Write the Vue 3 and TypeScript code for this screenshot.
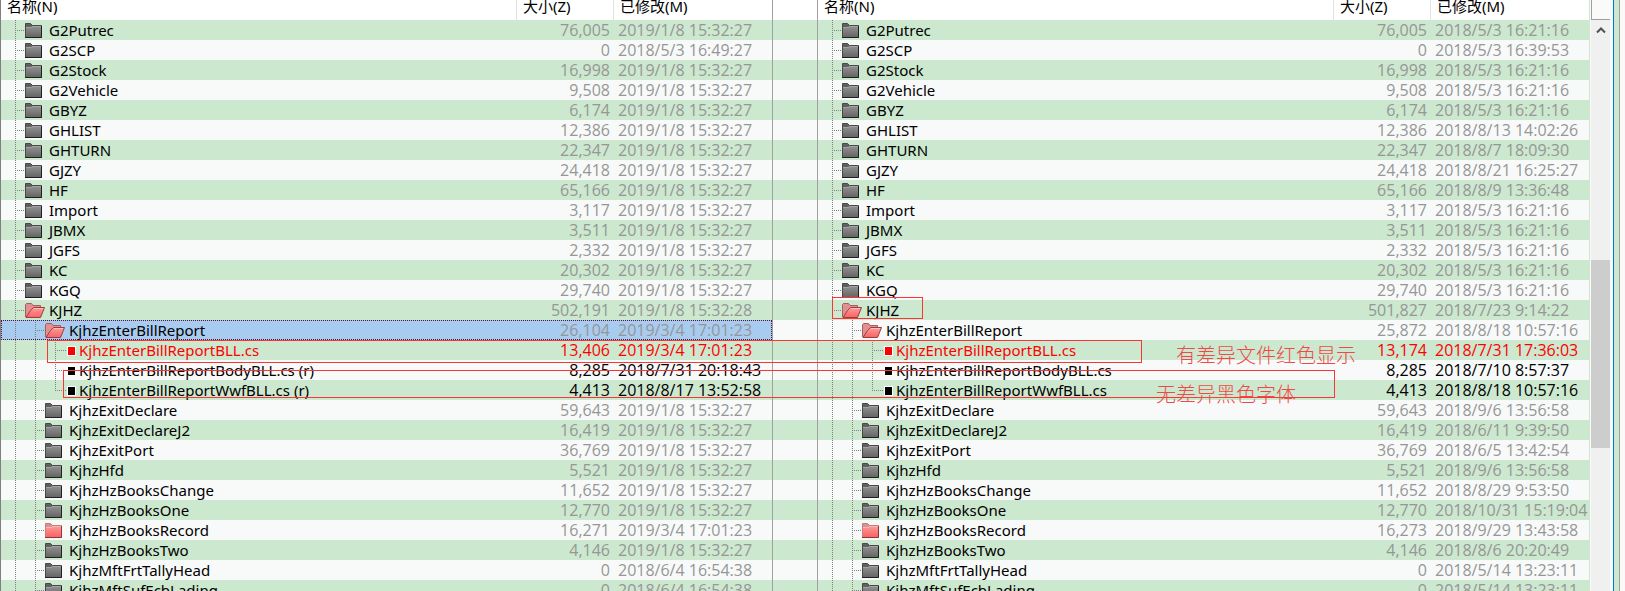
<script setup lang="ts">
type Kind = 'folder' | 'changed' | 'open' | 'file' | 'diff'

interface Entry {
  name: string
  kind: Kind
  depth: number
  size: string
  date: string
  selected?: boolean
  last?: boolean
}

type Source = [string, Kind, number, string, string, string, string]

const common = '2019/1/8 15:32:27'
const source: Source[] = [
  ['G2Putrec', 'folder', 1, '76,005', common, '76,005', '2018/5/3 16:21:16'],
  ['G2SCP', 'folder', 1, '0', '2018/5/3 16:49:27', '0', '2018/5/3 16:39:53'],
  ['G2Stock', 'folder', 1, '16,998', common, '16,998', '2018/5/3 16:21:16'],
  ['G2Vehicle', 'folder', 1, '9,508', common, '9,508', '2018/5/3 16:21:16'],
  ['GBYZ', 'folder', 1, '6,174', common, '6,174', '2018/5/3 16:21:16'],
  ['GHLIST', 'folder', 1, '12,386', common, '12,386', '2018/8/13 14:02:26'],
  ['GHTURN', 'folder', 1, '22,347', common, '22,347', '2018/8/7 18:09:30'],
  ['GJZY', 'folder', 1, '24,418', common, '24,418', '2018/8/21 16:25:27'],
  ['HF', 'folder', 1, '65,166', common, '65,166', '2018/8/9 13:36:48'],
  ['Import', 'folder', 1, '3,117', common, '3,117', '2018/5/3 16:21:16'],
  ['JBMX', 'folder', 1, '3,511', common, '3,511', '2018/5/3 16:21:16'],
  ['JGFS', 'folder', 1, '2,332', common, '2,332', '2018/5/3 16:21:16'],
  ['KC', 'folder', 1, '20,302', common, '20,302', '2018/5/3 16:21:16'],
  ['KGQ', 'folder', 1, '29,740', common, '29,740', '2018/5/3 16:21:16'],
  ['KJHZ', 'open', 1, '502,191', '2019/1/8 15:32:28', '501,827', '2018/7/23 9:14:22'],
  ['KjhzEnterBillReport', 'open', 2, '26,104', '2019/3/4 17:01:23', '25,872', '2018/8/18 10:57:16'],
  ['KjhzEnterBillReportBLL.cs', 'diff', 3, '13,406', '2019/3/4 17:01:23', '13,174', '2018/7/31 17:36:03'],
  ['KjhzEnterBillReportBodyBLL.cs', 'file', 3, '8,285', '2018/7/31 20:18:43', '8,285', '2018/7/10 8:57:37'],
  ['KjhzEnterBillReportWwfBLL.cs', 'file', 3, '4,413', '2018/8/17 13:52:58', '4,413', '2018/8/18 10:57:16'],
  ['KjhzExitDeclare', 'folder', 2, '59,643', common, '59,643', '2018/9/6 13:56:58'],
  ['KjhzExitDeclareJ2', 'folder', 2, '16,419', common, '16,419', '2018/6/11 9:39:50'],
  ['KjhzExitPort', 'folder', 2, '36,769', common, '36,769', '2018/6/5 13:42:54'],
  ['KjhzHfd', 'folder', 2, '5,521', common, '5,521', '2018/9/6 13:56:58'],
  ['KjhzHzBooksChange', 'folder', 2, '11,652', common, '11,652', '2018/8/29 9:53:50'],
  ['KjhzHzBooksOne', 'folder', 2, '12,770', common, '12,770', '2018/10/31 15:19:04'],
  ['KjhzHzBooksRecord', 'changed', 2, '16,271', '2019/3/4 17:01:23', '16,273', '2018/9/29 13:43:58'],
  ['KjhzHzBooksTwo', 'folder', 2, '4,146', common, '4,146', '2018/8/6 20:20:49'],
  ['KjhzMftFrtTallyHead', 'folder', 2, '0', '2018/6/4 16:54:38', '0', '2018/5/14 13:23:11'],
  ['KjhzMftSufEcbLading', 'folder', 2, '0', '2018/6/4 16:54:38', '0', '2018/5/14 13:23:11'],
]

function side(left: boolean): Entry[] {
  return source.map((s, i) => ({
    name: left && s[1] === 'file' ? `${s[0]} (r)` : s[0],
    kind: s[1],
    depth: s[2],
    size: left ? s[3] : s[5],
    date: left ? s[4] : s[6],
    selected: left && s[0] === 'KjhzEnterBillReport',
    last: s[2] === 3 && source[i + 1][2] < 3,
  }))
}

const panes = [
  { id: 'left', entries: side(true) },
  { id: 'right', entries: side(false) },
]

const treeWidth = (depth: number) => (depth === 3 ? 65 : depth * 20 + 4)
const isFile = (kind: Kind) => kind === 'file' || kind === 'diff'
</script>

<template>
  <main class="compare">
    <svg class="defs" aria-hidden="true">
      <defs>
        <linearGradient id="grey" x1="0" y1="0" x2="0" y2="1">
          <stop offset="0" stop-color="#929292" />
          <stop offset="1" stop-color="#666" />
        </linearGradient>
        <linearGradient id="pink" x1="0" y1="0" x2="0" y2="1">
          <stop offset="0" stop-color="#ff9a9a" />
          <stop offset="1" stop-color="#f96464" />
        </linearGradient>
      </defs>
    </svg>

    <section v-for="pane in panes" :key="pane.id" class="pane" :class="pane.id">
      <table>
        <colgroup>
          <col />
          <col class="size-col" />
          <col class="date-col" />
        </colgroup>
        <thead>
          <tr>
            <th scope="col">名称(N)</th>
            <th scope="col">大小(Z)</th>
            <th scope="col">已修改(M)</th>
          </tr>
        </thead>
        <tbody>
          <tr v-for="e in pane.entries" :key="e.name" :class="[e.kind, { selected: e.selected }]">
            <td>
              <div class="name">
                <svg class="tree" :width="treeWidth(e.depth)" height="20" aria-hidden="true">
                  <line v-for="d in e.depth" :key="d" :x1="d * 20 - 5.5" :x2="d * 20 - 5.5" y1="0" :y2="e.last && d === 3 ? 11 : 20" />
                  <line :x1="e.depth * 20 - 4" :x2="treeWidth(e.depth)" y1="10.5" y2="10.5" />
                </svg>
                <svg v-if="isFile(e.kind)" class="mark" width="13" height="20" aria-hidden="true">
                  <rect x="1" y="6" width="9" height="10" fill="#fff" />
                  <rect x="2" y="7" width="7" height="8" fill="currentColor" />
                </svg>
                <svg v-else-if="e.kind === 'open'" class="icon" width="24" height="20" aria-hidden="true">
                  <path d="M.5 17V4.500L1.500 3.500H6.500L8 5.500H15.500V8" fill="#e09090" stroke="#a85c5c" />
                  <path d="M1 17.500L5.500 10.500L8.500 7.500H19.500L15.500 17.500Z" fill="url(#pink)" stroke="#9c3c3c" />
                  <path d="M9 8.500H18" stroke="#ffc0c0" />
                </svg>
                <svg v-else class="icon" width="24" height="20" aria-hidden="true">
                  <path d="M.5 17.500V3.500H5.500L7.500 5.500H16.500V17.500Z" :fill="e.kind === 'changed' ? '#d89090' : '#606060'" :stroke="e.kind === 'changed' ? '#c47c7c' : '#484848'" />
                  <path d="M1 7.500H6L8 6H16V17H1Z" :fill="e.kind === 'changed' ? 'url(#pink)' : 'url(#grey)'" />
                  <path d="M1 7.500H6L8 6.500H16" fill="none" :stroke="e.kind === 'changed' ? '#ffb4b4' : '#a4a4a4'" />
                  <path d="M0 17.500H16.500V6" fill="none" :stroke="e.kind === 'changed' ? '#8c3838' : '#202020'" />
                </svg>
                <span>{{ e.name }}</span>
              </div>
            </td>
            <td class="size">{{ e.size }}</td>
            <td class="date">{{ e.date }}</td>
          </tr>
        </tbody>
      </table>
    </section>

    <aside class="scroll">
      <div class="corner"></div>
      <button type="button" aria-label="Scroll up">
        <svg width="10" height="8" aria-hidden="true">
          <path d="M1 6.500L5 2.500L9 6.500" fill="none" stroke="#505050" stroke-width="2" />
        </svg>
      </button>
      <div class="track"><div class="thumb"></div></div>
    </aside>
    <div class="edge"></div>

    <div class="box box-folder"></div>
    <div class="box box-diff"></div>
    <div class="box box-same"></div>
    <p class="note note-diff">有差异文件红色显示</p>
    <p class="note note-same">无差异黑色字体</p>
  </main>
</template>

<style>
body {
  margin: 0;
  overflow: hidden;
}
</style>

<style scoped>
.compare {
  position: relative;
  display: grid;
  grid-template-columns: minmax(0, 1fr) 44px minmax(0, 1fr) 23px 12px;
  grid-template-rows: 100%;
  height: 100vh;
  overflow: hidden;
  font-family: "Noto Sans", "Noto Sans CJK SC", sans-serif;
  font-size: 15px;
  color: #000;
  background: linear-gradient(#fff 20px, transparent 20px),
    repeating-linear-gradient(#f8fafa 0 20px, #cce8cf 20px 40px);
}
.defs {
  position: absolute;
  width: 0;
  height: 0;
}
.pane {
  min-width: 0;
}
.left {
  border-left: 1px solid #808080;
  border-right: 1px solid #a0a0a0;
}
.right {
  grid-column: 3;
  border-left: 1px solid #a0a0a0;
  border-right: 1px solid #cce8cf;
}
table {
  width: 100%;
  table-layout: fixed;
  border-collapse: separate;
  border-spacing: 0;
}
.size-col {
  width: 97px;
}
.date-col {
  width: 158px;
}
th {
  box-sizing: border-box;
  height: 20px;
  padding: 0 6px 8px;
  line-height: 12px;
  font-weight: 400;
  text-align: left;
  white-space: nowrap;
  background: #fff;
  border-right: 1px solid #e2e2e2;
}
th:last-child {
  border-right: 0;
}
td {
  height: 20px;
  padding: 0;
  line-height: 20px;
  white-space: nowrap;
}
.name {
  display: flex;
  height: 20px;
}
.name svg {
  flex: none;
}
.tree line {
  stroke: #808080;
  stroke-dasharray: 1 1;
}
.size {
  padding-right: 4px;
  text-align: right;
}
.date {
  padding-left: 4px;
}
.size,
.date {
  font-family: "Open Sans", sans-serif;
  font-size: 16px;
  color: #969696;
}
.file td {
  color: #000;
}
.diff td {
  color: #f00;
}
.selected td {
  background: #a8cbf0;
}
.selected {
  outline: 1px dotted #5c1038;
  outline-offset: -1px;
}
.scroll {
  display: flex;
  flex-direction: column;
  box-sizing: border-box;
  padding: 0 3px 0 1px;
  background: #fafafa;
}
.corner {
  box-sizing: border-box;
  flex: none;
  height: 20px;
  border-left: 1px solid #a0a0a0;
  border-bottom: 1px solid #a0a0a0;
}
button {
  display: flex;
  flex: none;
  align-items: center;
  justify-content: center;
  height: 20px;
  padding: 0;
  border: 0;
  background: #f0f0f0;
}
.track {
  flex: 1;
  background: #f0f0f0;
}
.track::before {
  content: "";
  display: block;
  height: 40%;
}
.thumb {
  height: 34%;
  background: #cdcdcd;
}
.edge {
  box-sizing: border-box;
  width: 7px;
  border-left: 1px solid #0078d7;
  border-right: 1px solid #a0a0a0;
  background: #cce8cf;
  box-shadow: 6px 0 #f8fafa;
}
.box {
  position: absolute;
  box-sizing: border-box;
  border: 1px solid #f33;
}
.box-folder {
  left: 832px;
  top: 297px;
  width: 91px;
  height: 22px;
}
.box-diff {
  left: 47px;
  top: 340px;
  width: 1095px;
  height: 23px;
}
.box-same {
  left: 63px;
  top: 370px;
  width: 1272px;
  height: 28px;
}
.note {
  position: absolute;
  margin: 0;
  font-family: "Noto Sans CJK SC", sans-serif;
  font-size: 20px;
  font-weight: 300;
  line-height: 24px;
  color: #f04848;
}
.note-diff {
  left: 1176px;
  top: 343px;
}
.note-same {
  left: 1156px;
  top: 382px;
}
</style>
